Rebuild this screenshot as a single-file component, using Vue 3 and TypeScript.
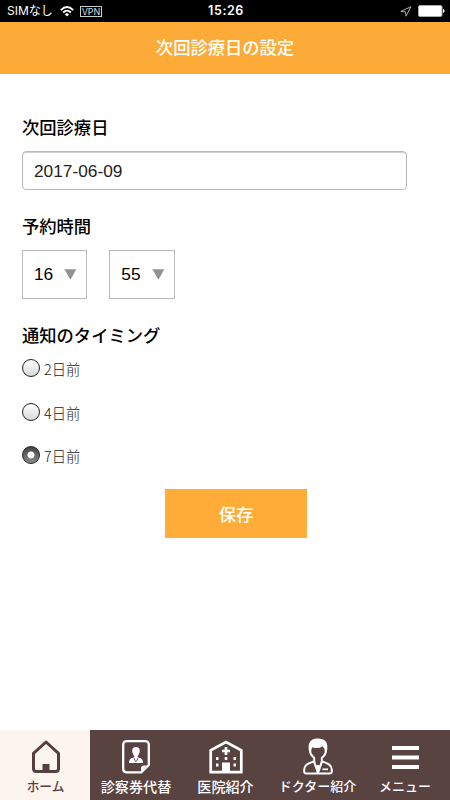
<script setup lang="ts">
import { ref } from 'vue'

const date = ref('2017-06-09')
const times = ['16', '55']
const timings = ['2日前', '4日前', '7日前']
const selected = ref(2)
</script>

<template>
  <div class="screen">
    <div class="status">
      <div class="carrier">
        <span class="sim">SIMなし</span>
        <svg class="wifi" width="14" height="11" viewBox="0 0 14 11" fill="none" stroke="#fff" stroke-width="1.8">
          <path d="M.8 4.1Q7-2 13.2 4.1M3.1 6.5Q7 2.8 10.9 6.5" />
          <path d="M4.8 8.2Q7 6.4 9.2 8.2L7 10.6Z" fill="#fff" stroke="none" />
        </svg>
        <span class="vpn">VPN</span>
      </div>
      <span class="clock">15:26</span>
      <div class="indicators">
        <svg width="12" height="11" viewBox="0 0 12 11" fill="none" stroke="#aaa" stroke-width="1">
          <path d="M11 .7L.8 5.4L5.4 5.8L6 10.2Z" />
        </svg>
        <svg class="battery" width="27" height="12" viewBox="0 0 27 12">
          <rect x=".5" y=".5" width="23.5" height="11" rx="1.5" fill="#fff" stroke="#aaa" />
          <path d="M25 4Q26.6 4.4 26.6 6T25 8Z" fill="#fff" />
        </svg>
      </div>
    </div>

    <header class="header">次回診療日の設定</header>

    <main class="form">
      <h2 class="label">次回診療日</h2>
      <div class="date">{{ date }}</div>

      <h2 class="label time-label">予約時間</h2>
      <div class="times">
        <div v-for="time in times" :key="time" class="select">
          <span>{{ time }}</span>
          <svg width="13" height="11" viewBox="0 0 13 11"><path d="M.4.2H12.4L6.4 10.8Z" fill="#929292" /></svg>
        </div>
      </div>

      <h2 class="label timing-label">通知のタイミング</h2>
      <div class="radios">
        <div v-for="(timing, i) in timings" :key="timing" class="radio" @click="selected = i">
          <span class="dot" :class="{ checked: selected === i }"></span>
          <span class="timing">{{ timing }}</span>
        </div>
      </div>

      <button class="save" type="button">保存</button>
    </main>

    <nav class="tabs">
      <div class="tab active">
        <svg width="28" height="34" viewBox="0 0 28 34" fill="none" stroke="#55403f" stroke-width="3" stroke-linejoin="round">
          <path d="M1.5 13.3L14 2L26.5 13.3V28.5Q26.5 31.5 23.5 31.5H4.5Q1.5 31.5 1.5 28.5Z" />
          <path d="M10.5 24H17.5V31.5H10.5Z" fill="#55403f" stroke="none" />
        </svg>
        <span class="name home">ホーム</span>
      </div>
      <div class="tab card">
        <svg width="28" height="34" viewBox="0 0 28 34" fill="none" stroke="#fff" stroke-width="2.3" stroke-linejoin="round">
          <path d="M5 1.2H23Q26.8 1.2 26.8 5V25L19.5 32.3H5Q1.2 32.3 1.2 28.5V5Q1.2 1.2 5 1.2Z" />
          <path d="M26.8 25L19.5 32.3V28Q19.5 26 21.5 26Q25 26.5 26.8 25Z" fill="#fff" stroke-width="1" />
          <path d="M14 7C10.8 7 9.8 9.3 10.4 12Q10.8 14.8 12.3 16V17.2C9.5 18.2 7 18.6 7 23H21C21 18.6 18.5 18.2 15.7 17.2V16Q17.2 14.8 17.6 12C18.2 9.3 17.2 7 14 7Z" fill="#fff" stroke="none" />
          <path d="M12 18L13.6 21.5M16 18L14.4 21.5" stroke="#584341" stroke-width=".9" />
        </svg>
        <span class="name wide">診察券代替</span>
      </div>
      <div class="tab clinic">
        <svg width="34" height="34" viewBox="0 0 34 34" fill="none" stroke="#fff">
          <path d="M1.7 32.2V10.2L17 2L32.3 10.2V32.2Z" stroke-width="2.7" />
          <path d="M17 7V15M13 11H21" stroke-width="2.7" />
          <path d="M13 22.5H21V32.5H13ZM7 17H9.5V20H7ZM15.7 17H18.3V20H15.7ZM24.5 17H27V20H24.5ZM7 23.5H9.5V26.5H7ZM24.5 23.5H27V26.5H24.5Z" fill="#fff" stroke="none" />
        </svg>
        <span class="name wide">医院紹介</span>
      </div>
      <div class="tab doctor">
        <svg width="30" height="37" viewBox="0 0 30 37" fill="none" stroke="#fff" stroke-width="2" stroke-linejoin="round">
          <path d="M7 9C6.5 13 7.5 16.5 10 18.7L11.2 20V23.2C8 25 1.2 25.5 1.2 31.5V33.5Q1.2 35.4 3.5 35.4H26.5Q28.8 35.4 28.8 33.5V31.5C28.8 25.5 22 25 18.8 23.2V20L20 18.7C22.5 16.5 23.5 13 23 9" />
          <path d="M6.2 13.5C4.3 5.5 7 .8 14 .4C23 0 25.7 5 23.8 13.5L21.8 14Q22 10.2 19.5 8.2Q15 11.3 9.4 9.2Q8 11 8.1 14Z" fill="#fff" stroke="none" />
          <path d="M11 23.5L15 34.5L19 23.5" stroke-width="2.2" />
          <path d="M13.5 27H16.5L15.8 34H14.2Z" fill="#fff" stroke="none" />
          <path d="M19.5 31.3H25" stroke-width="1.7" />
        </svg>
        <span class="name">ドクター紹介</span>
      </div>
      <div class="tab menu">
        <svg width="27" height="24" viewBox="0 0 27 24" fill="#fff">
          <path d="M0 0H27V4H0ZM0 9.5H27V13.5H0ZM0 19H27V23H0Z" />
        </svg>
        <span class="name">メニュー</span>
      </div>
    </nav>
  </div>
</template>

<style>
body {
  margin: 0;
}
</style>

<style scoped>
.screen {
  width: 450px;
  height: 800px;
  display: flex;
  flex-direction: column;
  background: #fff;
  color: #000;
  overflow: hidden;
  font-family: "Liberation Sans", "Noto Sans CJK JP", sans-serif;
}
.status {
  box-sizing: border-box;
  height: 22px;
  flex: none;
  display: grid;
  grid-template-columns: 1fr 60px 1fr;
  align-items: center;
  padding: 0 5px 0 7px;
  background: #000;
  color: #fff;
}
.carrier {
  display: flex;
  align-items: center;
  font: 12px/22px Inter, "Noto Sans CJK JP", sans-serif;
}
.sim {
  width: 46px;
  white-space: nowrap;
}
.wifi {
  margin-left: 7px;
}
.vpn {
  box-sizing: border-box;
  width: 22px;
  height: 11px;
  margin-left: 6px;
  border: 1px solid #ccc;
  font-size: 9px;
  line-height: 9px;
  text-align: center;
  color: #ddd;
}
.clock {
  text-align: center;
  font: 600 12.5px/22px Inter, sans-serif;
  letter-spacing: .6px;
}
.indicators {
  display: flex;
  justify-content: flex-end;
  align-items: center;
  gap: 6px;
}
.header {
  height: 52px;
  flex: none;
  background: #fdab38;
  color: #fff;
  font: 500 17.3px/50px "Noto Sans CJK JP", sans-serif;
  text-align: center;
}
.form {
  flex: 1;
  display: flex;
  flex-direction: column;
  padding: 41px 43px 0 22px;
}
.label {
  margin: 0;
  font: 500 17.3px/24px "Noto Sans CJK JP", sans-serif;
}
.date {
  box-sizing: border-box;
  height: 39px;
  margin-top: 12px;
  padding-left: 11px;
  border: 1px solid #bbb;
  border-radius: 4px;
  box-shadow: inset 0 1px 1px #ccc;
  font-size: 17.3px;
  line-height: 39px;
  color: #222;
}
.time-label {
  margin-top: 24px;
}
.times {
  display: flex;
  gap: 22px;
  margin-top: 12px;
}
.select {
  box-sizing: border-box;
  width: 65.3px;
  height: 49px;
  display: flex;
  align-items: center;
  justify-content: space-between;
  padding: 0 9px 0 11px;
  border: 1px solid #bbb;
  font-size: 17.3px;
}
.select svg {
  margin-top: -1px;
}
.timing-label {
  margin-top: 24px;
}
.radios {
  display: flex;
  flex-direction: column;
  gap: 23.5px;
  margin-top: 11px;
}
.radio {
  display: flex;
  align-items: center;
  gap: 4px;
  height: 20px;
  color: #222;
}
.timing {
  padding-top: 2px;
  font: 300 14.3px/20px "Noto Sans CJK JP", sans-serif;
}
.dot {
  box-sizing: border-box;
  width: 18px;
  height: 18px;
  border: 1px solid #222;
  border-radius: 50%;
  background: linear-gradient(#fff, #d9d9d9);
}
.dot.checked {
  background: radial-gradient(circle, #fff 0 3px, transparent 4px), linear-gradient(#444, #888);
}
.save {
  width: 142px;
  height: 49px;
  margin: 24px 0 0 143px;
  padding: 0;
  border: 0;
  background: #ffac38;
  color: #fff;
  font: 500 17.3px/49px "Noto Sans CJK JP", sans-serif;
}
.tabs {
  box-sizing: border-box;
  height: 70px;
  flex: none;
  display: grid;
  grid-template-columns: 90px 92px 87px 97px 84px;
  background: #584341;
  color: #fff;
}
.tab {
  box-sizing: border-box;
  height: 70px;
  display: flex;
  flex-direction: column;
  align-items: center;
  justify-content: space-between;
  padding: 10px 0 5px;
}
.active {
  background: #fbf4ef;
  color: #55403f;
  padding-left: 1px;
}
.doctor {
  padding-top: 8px;
}
.menu {
  padding: 16px 6px 5px 0;
}
.name {
  font: 500 13px/18px "Noto Sans CJK JP", sans-serif;
  white-space: nowrap;
}
.wide {
  font-size: 14.1px;
}
.home {
  font-size: 12.7px;
}
</style>
